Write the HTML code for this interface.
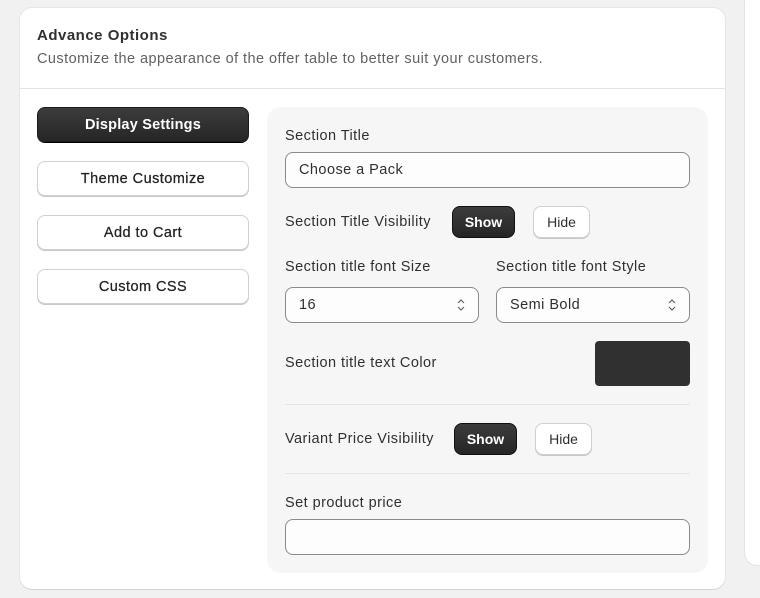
<!DOCTYPE html>
<html><head><style>
*{box-sizing:border-box;margin:0;padding:0}
body{width:760px;height:598px;background:#f1f1f1;font-family:"Liberation Sans",sans-serif;color:#303030;position:relative;overflow:hidden;font-size:14px;letter-spacing:0.45px}
.a{position:absolute;white-space:nowrap}
.card{left:20px;top:8px;width:705px;height:581px;background:#fff;border-radius:12px;box-shadow:0 1px 0 #d4d4d4,0 0 0 1px #e6e6e6}
.side{left:745px;top:-10px;width:40px;height:575px;background:#fff;border-radius:12px;box-shadow:0 0 0 1px #e3e3e3}
.nav{left:37px;width:212px;height:35px;border-radius:8px;background:#fff;border:1px solid #d0d0d0;box-shadow:0 1px 0 #c8c8c8;text-align:center;line-height:35px;font-size:14.5px;color:#222;-webkit-text-stroke:0.25px #222}
.nav.on{background:linear-gradient(#3c3c3c,#262626);color:#fff;font-weight:bold;border-color:#1a1a1a;box-shadow:0 1px 0 #000;-webkit-text-stroke:0;letter-spacing:0.2px}
.panel{left:267px;top:107px;width:441px;height:466px;background:#f6f6f6;border-radius:14px}
.lbl{font-size:14.5px;color:#303030;margin-top:1px}
.inp{background:#fdfdfd;border:1px solid #8a8a8a;border-radius:8px;height:36px;line-height:35px;padding-left:13px;font-size:14.5px}
.btn{height:32px;border-radius:8px;text-align:center;line-height:30px;font-size:14px;letter-spacing:0}
.bd{background:linear-gradient(#3c3c3c,#262626);color:#fff;font-weight:bold;border:1px solid #111}
.bl{background:#fff;border:1px solid #d0d0d0;box-shadow:0 1px 0 #c8c8c8}
.hr{height:1px;background:#e6e6e6;left:285px;width:405px}
.chev{right:12px;top:10px}
</style></head><body>
<div class="a side"></div>
<div class="a card"></div>
<div class="a" style="left:37px;top:27px;font-weight:bold;font-size:15px;color:#303030;letter-spacing:0.5px">Advance Options</div>
<div class="a" style="left:37px;top:51px;font-size:14.5px;color:#616161">Customize the appearance of the offer table to better suit your customers.</div>
<div class="a" style="left:20px;top:88px;width:705px;height:1px;background:#e3e3e3"></div>
<div class="a nav on" style="top:107px">Display Settings</div>
<div class="a nav" style="top:161px">Theme Customize</div>
<div class="a nav" style="top:215px">Add to Cart</div>
<div class="a nav" style="top:269px">Custom CSS</div>
<div class="a panel"></div>
<div class="a lbl" style="left:285px;top:127px">Section Title</div>
<div class="a inp" style="left:285px;top:152px;width:405px">Choose a Pack</div>
<div class="a lbl" style="left:285px;top:213px">Section Title Visibility</div>
<div class="a btn bd" style="left:452px;top:206px;width:63px">Show</div>
<div class="a btn bl" style="left:533px;top:206px;width:57px">Hide</div>
<div class="a lbl" style="left:285px;top:258px">Section title font Size</div>
<div class="a lbl" style="left:496px;top:258px">Section title font Style</div>
<div class="a inp" style="left:285px;top:287px;width:194px">16<svg class="a chev" width="10" height="14" viewBox="0 0 10 14"><path d="M2 5l3-3 3 3M2 9l3 3 3-3" fill="none" stroke="#666" stroke-width="1.2"/></svg></div>
<div class="a inp" style="left:496px;top:287px;width:194px">Semi Bold<svg class="a chev" width="10" height="14" viewBox="0 0 10 14"><path d="M2 5l3-3 3 3M2 9l3 3 3-3" fill="none" stroke="#666" stroke-width="1.2"/></svg></div>
<div class="a lbl" style="left:285px;top:354px">Section title text Color</div>
<div class="a" style="left:595px;top:341px;width:95px;height:45px;background:#303030;border-radius:4px"></div>
<div class="a hr" style="top:404px"></div>
<div class="a lbl" style="left:285px;top:430px">Variant Price Visibility</div>
<div class="a btn bd" style="left:454px;top:423px;width:63px">Show</div>
<div class="a btn bl" style="left:535px;top:423px;width:57px">Hide</div>
<div class="a hr" style="top:473px"></div>
<div class="a lbl" style="left:285px;top:494px">Set product price</div>
<div class="a inp" style="left:285px;top:519px;width:405px"></div>
</body></html>
